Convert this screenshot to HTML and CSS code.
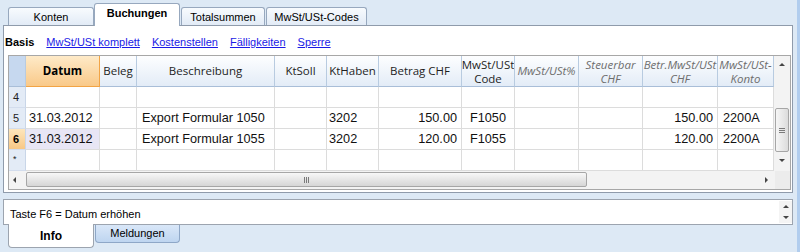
FILE: index.html
```html
<!DOCTYPE html>
<html>
<head>
  <meta charset="utf-8" />
  <title>Buchungen</title>
  <link rel="stylesheet" href="styles.css">
</head>
<body>
<div class="app">

  <div class="tabs">
    <span class="tab t-konten">Konten</span>
    <span class="tab active">Buchungen</span>
    <span class="tab t-total">Totalsummen</span>
    <span class="tab t-codes">MwSt/USt-Codes</span>
  </div>

  <div class="panel">
    <div class="views">
      <b>Basis</b>
      <a href="#">MwSt/USt komplett</a>
      <a href="#">Kostenstellen</a>
      <a href="#">Fälligkeiten</a>
      <a href="#">Sperre</a>
    </div>

    <div class="grid">
      <div class="grid-body">
        <div class="sheet">
          <!-- header -->
          <div class="hd corner"></div>
          <div class="hd sel"><span>Datum</span></div>
          <div class="hd"><span>Beleg</span></div>
          <div class="hd"><span>Beschreibung</span></div>
          <div class="hd"><span>KtSoll</span></div>
          <div class="hd"><span>KtHaben</span></div>
          <div class="hd"><span>Betrag CHF</span></div>
          <div class="hd two"><span>MwSt/USt<br>Code</span></div>
          <div class="hd calc"><span>MwSt/USt%</span></div>
          <div class="hd calc two"><span>Steuerbar<br>CHF</span></div>
          <div class="hd calc two"><span>Betr.MwSt/USt<br>CHF</span></div>
          <div class="hd calc two"><span>MwSt/USt-<br>Konto</span></div>

          <!-- row 4 -->
          <div class="rn">4</div>
          <div></div><div></div><div></div><div></div><div></div>
          <div></div><div></div><div></div><div></div><div></div><div></div>

          <!-- row 5 -->
          <div class="rn">5</div>
          <div>31.03.2012</div>
          <div></div>
          <div class="txt">Export Formular 1050</div>
          <div></div>
          <div class="acc">3202</div>
          <div class="num">150.00</div>
          <div class="ctr">F1050</div>
          <div></div>
          <div></div>
          <div class="num">150.00</div>
          <div class="txt">2200A</div>

          <!-- row 6 -->
          <div class="rn sel">6</div>
          <div class="cur">31.03.2012</div>
          <div></div>
          <div class="txt">Export Formular 1055</div>
          <div></div>
          <div class="acc">3202</div>
          <div class="num">120.00</div>
          <div class="ctr">F1055</div>
          <div></div>
          <div></div>
          <div class="num">120.00</div>
          <div class="txt">2200A</div>

          <!-- new row -->
          <div class="rn star">*</div>
          <div></div><div></div><div></div><div></div><div></div>
          <div></div><div></div><div></div><div></div><div></div><div></div>
        </div>

        <div class="vscroll">
          <div class="vbtn"><i class="tri-up"></i></div>
          <div class="vthumb"><i class="grip-h"></i></div>
          <div class="vbtn down"><i class="tri-down"></i></div>
        </div>
      </div>

      <div class="hscroll">
        <div class="hbtn"><i class="tri-left"></i></div>
        <div class="hthumb"><i class="grip-v"></i></div>
        <div class="htrack"></div>
        <div class="hbtn"><i class="tri-right"></i></div>
        <div class="hcorner"></div>
      </div>
    </div>
  </div>

  <div class="info">
    <span>Taste F6 = Datum erhöhen</span>
    <div class="spin">
      <i class="tri-up"></i>
      <i class="tri-down"></i>
    </div>
  </div>

  <div class="btabs">
    <span class="btab active">Info</span>
    <span class="btab">Meldungen</span>
  </div>

</div>
</body>
</html>
```

FILE: styles.css
```css
body
{
  margin: 0;
  background-color: #dde9f5;
  font-family: "Liberation Sans", Arial, sans-serif;
  font-size: 11px;
  color: #000;
}

.app
{
  width: 797px;
  height: 252px;
  border-right: 3px solid #b1cdee;
}

/* top tabs */

.tabs
{
  display: flex;
  align-items: flex-end;
  height: 25px;
  padding-left: 8px;
}

.tab
{
  box-sizing: border-box;
  height: 18px;
  width: 86px;
  border: 1px solid #97a8be;
  border-bottom: none;
  border-radius: 3px 3px 0 0;
  background: linear-gradient(#f8fbfe, #e2ebf6);
  display: flex;
  align-items: center;
  justify-content: center;
  padding-top: 1px;
}

.tab.active
{
  height: 23px;
  background: #fff;
  font-weight: bold;
  margin-bottom: -1px;
  padding-top: 0;
  padding-bottom: 5px;
  position: relative;
}

.t-total
{
  width: 84px;
  margin-left: 1px;
}

.t-codes
{
  width: 101px;
  margin-left: 1px;
}

/* main panel */

.panel
{
  box-sizing: border-box;
  margin-left: 3px;
  width: 790px;
  height: 168px;
  border: 1px solid #8f9bab;
  background: #fff;
}

.views
{
  box-sizing: border-box;
  height: 29px;
  display: flex;
  align-items: center;
  gap: 12px;
  padding: 3px 0 0 1px;
}

.views a
{
  color: #1a1ae6;
  text-decoration: underline;
}

.grid
{
  box-sizing: border-box;
  margin-left: 4px;
  width: 783px;
  height: 135px;
  border: 1px solid #a7a7a7;
}

.grid-body
{
  display: flex;
  height: 115px;
}

.sheet
{
  display: grid;
  grid-template-columns: 17px 74px 37px 138px 52px 52px 83px 53px 64px 64px 75px 56px;
  grid-template-rows: 31px repeat(4, 21px);
  width: 765px;
  overflow: hidden;
}

.sheet > div
{
  box-sizing: border-box;
  border-right: 1px solid #dcdcdc;
  border-bottom: 1px solid #dcdcdc;
  display: flex;
  align-items: center;
  padding: 0 3px;
  overflow: hidden;
  white-space: nowrap;
  font-family: "Liberation Sans", Arial, sans-serif;
  font-size: 12.7px;
  color: #111;
}

.sheet > .hd
{
  background: linear-gradient(#fdfeff, #e3ecf7);
  border-right-color: #b8cbe0;
  border-bottom-color: #a9bed8;
  justify-content: center;
  text-align: center;
  padding: 0;
  font-family: "Open Sans", "Liberation Sans", sans-serif;
  font-size: 11.5px;
  line-height: 14px;
  color: #1e1e1e;
}

.sheet > .hd.two
{
  padding-top: 1px;
}

.sheet > .hd.calc
{
  font-style: italic;
  color: #6e6e6e;
}

.sheet > .hd.corner
{
  background: #c6d8ef;
}

.sheet > .hd.sel
{
  background: linear-gradient(#feeac8, #f9c989);
  border-right-color: #f2a445;
  border-bottom-color: #f2a445;
  font-weight: bold;
  color: #000;
}

.sheet > .rn
{
  background: #e3ebf6;
  border-right-color: #c9d6e8;
  border-bottom-color: #d3dded;
  padding-left: 4px;
  font-size: 11px;
  color: #222;
}

.sheet > .rn.sel
{
  background: linear-gradient(#fde6bd, #f8c885);
  font-weight: bold;
  color: #000;
}

.sheet > .rn.star
{
  font-size: 9px;
  align-items: flex-start;
  padding-top: 4px;
}

.sheet > .cur
{
  background: #e8e6f5;
}

.sheet > .txt
{
  padding-left: 5px;
}

.sheet > .acc
{
  padding-left: 2px;
}

.sheet > .num
{
  justify-content: flex-end;
  padding-right: 4px;
}

.sheet > .ctr
{
  justify-content: center;
}

/* scrollbars */

.vscroll
{
  width: 16px;
  background: #f3f3f3;
  display: flex;
  flex-direction: column;
  align-items: center;
}

.vbtn
{
  height: 16px;
  width: 16px;
  display: flex;
  align-items: center;
  justify-content: center;
}

.vbtn.down
{
  margin-top: auto;
  padding-bottom: 3px;
}

.vthumb
{
  box-sizing: border-box;
  margin-top: 36px;
  width: 14px;
  height: 44px;
  border: 1px solid #a6a6a6;
  border-radius: 2px;
  background: linear-gradient(90deg, #f6f6f6, #dcdcdc);
  display: flex;
  align-items: center;
  justify-content: center;
}

.grip-h
{
  width: 6px;
  height: 5px;
  background: repeating-linear-gradient(#7a7a7a 0 1px, transparent 1px 2px);
}

.hscroll
{
  display: flex;
  height: 18px;
  background: #f3f3f3;
}

.hbtn
{
  width: 17px;
  display: flex;
  align-items: center;
  justify-content: center;
}

.hbtn + .htrack + .hbtn
{
  width: 16px;
}

.hthumb
{
  box-sizing: border-box;
  width: 561px;
  height: 15px;
  margin-top: 1px;
  border: 1px solid #a6a6a6;
  border-radius: 2px;
  background: linear-gradient(#f7f7f7, #d6d6d6);
  display: flex;
  align-items: center;
  justify-content: center;
}

.grip-v
{
  width: 5px;
  height: 6px;
  background: repeating-linear-gradient(90deg, #7a7a7a 0 1px, transparent 1px 2px);
}

.htrack
{
  flex: 1;
}

.hcorner
{
  width: 15px;
  background: #ececec;
}

.tri-up, .tri-down, .tri-left, .tri-right
{
  display: block;
  width: 0;
  height: 0;
}

.tri-up
{
  border-left: 3px solid transparent;
  border-right: 3px solid transparent;
  border-bottom: 3px solid #454545;
}

.tri-down
{
  border-left: 3px solid transparent;
  border-right: 3px solid transparent;
  border-top: 3px solid #454545;
}

.tri-left
{
  border-top: 3px solid transparent;
  border-bottom: 3px solid transparent;
  border-right: 3px solid #454545;
  margin-right: 6px;
}

.tri-right
{
  border-top: 3px solid transparent;
  border-bottom: 3px solid transparent;
  border-left: 3px solid #454545;
}

/* info box */

.info
{
  box-sizing: border-box;
  margin: 6px 0 0 3px;
  width: 790px;
  height: 26px;
  border: 1px solid #9ca4af;
  background: #fff;
  display: flex;
  align-items: center;
  padding: 4px 0 0 6px;
}

.spin
{
  margin-left: auto;
  width: 13px;
  height: 22px;
  margin-top: -4px;
  background: #f4f4f4;
  display: flex;
  flex-direction: column;
  align-items: center;
  justify-content: space-around;
}

/* bottom tabs */

.btabs
{
  display: flex;
  align-items: flex-start;
  padding-left: 8px;
  gap: 1px;
}

.btab
{
  box-sizing: border-box;
  width: 85px;
  height: 18px;
  border: 1px solid #8ea7c7;
  border-top: none;
  border-radius: 0 0 4px 4px;
  background: linear-gradient(#d9e7f8, #bed5f0);
  display: flex;
  align-items: center;
  justify-content: center;
  padding-bottom: 1px;
}

.btab.active
{
  width: 86px;
  height: 24px;
  margin-top: -1px;
  background: #fff;
  border-color: #9ca4af;
  font-weight: bold;
  font-size: 12px;
  padding-top: 2px;
  position: relative;
}
```
